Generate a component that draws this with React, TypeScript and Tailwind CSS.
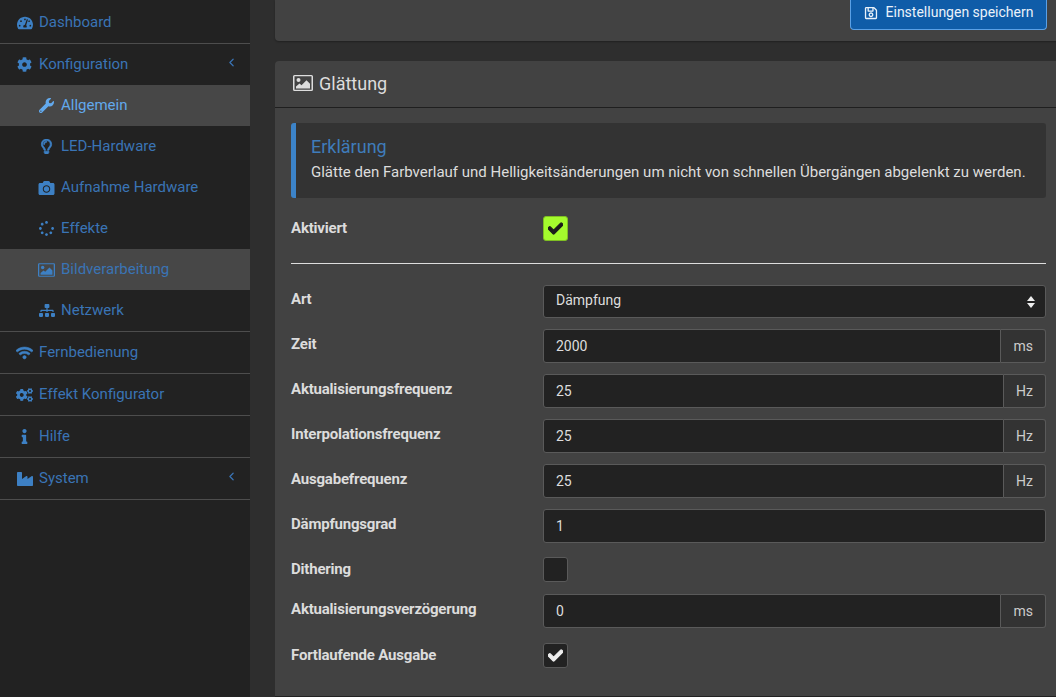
import React from 'react';
import { ChevronLeft } from 'lucide-react';
import {
    FaCamera, FaCheck, FaCog, FaCogs, FaIndustry, FaInfo, FaRegLightbulb,
    FaRegSave, FaSitemap, FaSpinner, FaTachometerAlt, FaWifi, FaWrench,
} from 'react-icons/fa';

type IconType = React.ComponentType<{ className?: string }>;

const topRow = 'flex items-center border-[#4d4d4d] pl-[16px] pr-[12px] text-[#3a74b5]';
const labelText = 'shrink-0 w-[252px] text-[15px] font-bold tracking-[-0.2px] text-[#dcdcdc]';

// picture-o, the library only ships the newer outline
function PictureIcon({ className }: { className?: string }) {
    return (
        <svg viewBox="0 0 20 16" fill="currentColor" className={className}>
            <path fillRule="evenodd" d="M1.500 0h17A1.500 1.500 0 0 1 20 1.500v13a1.500 1.500 0 0 1-1.500 1.500h-17A1.500 1.500 0 0 1 0 14.500v-13A1.500 1.500 0 0 1 1.500 0zM1.500 1.200v13.600h17V1.200z" />
            <circle cx="5.500" cy="5" r="2" />
            <path d="M3 13.500v-2l3.500-3 2 1.700 5-5 3.500 3.500v4.800z" />
        </svg>
    );
}

function TopItem({ icon: Icon, label, caret, iconClass }: { icon: IconType; label: string; caret?: boolean; iconClass?: string }) {
    return (
        <div className={`${topRow} h-[42px] border-b`}>
            <span className="flex w-[23px] shrink-0 justify-center pr-[6px]">
                <Icon className={iconClass ?? 'h-[16px] w-[16px] text-[#3d80c4]'} />
            </span>
            <span className="flex-1 text-[15px]">{label}</span>
            {caret && <ChevronLeft strokeWidth={2.25} className="-mt-[4px] h-[13px] w-[13px] text-[#3a74b5]" />}
        </div>
    );
}

function SubItem({ icon: Icon, label, state, iconClass }: { icon: IconType; label: string; state?: 'current' | 'open'; iconClass?: string }) {
    const bg = state ? 'bg-[#474747]' : '';
    const text = state === 'current' ? 'text-[#62a9ed]' : 'text-[#3a74b5]';
    return (
        <div className={`flex h-[41px] items-center pl-[38px] ${bg} ${text}`}>
            <span className="flex w-[23px] shrink-0 items-center justify-center pr-[6px]">
                <Icon className={`${iconClass ?? 'h-[15px] w-[15px]'} ${state === 'current' ? 'text-[#62a9ed]' : 'text-[#3d80c4]'}`} />
            </span>
            <span className="text-[15px]">{label}</span>
        </div>
    );
}

function Field({ label, value, unit }: { label: string; value: string; unit?: string }) {
    return (
        <div className="mb-[11px] flex h-[34px]">
            <label className={`${labelText} pt-[4px]`}>{label}</label>
            <div className="flex flex-1">
                <div className={`flex flex-1 items-center border border-[#5a5a5a] bg-[#222222] pl-[12px] text-[14px] text-[#dddddd] ${unit ? 'rounded-l-[3px]' : 'rounded-[3px]'}`}>
                    {value}
                </div>
                {unit && (
                    <div className="flex items-center rounded-r-[3px] border border-l-0 border-[#5a5a5a] bg-[#333333] px-[12px] text-[14px] text-[#cccccc]">
                        {unit}
                    </div>
                )}
            </div>
        </div>
    );
}

function CheckRow({ label, checked, accent, className }: { label: string; checked?: boolean; accent?: boolean; className?: string }) {
    return (
        <div className={`flex h-[25px] ${className ?? ''}`}>
            <label className={`${labelText} pt-px`}>{label}</label>
            <span className={`flex h-[25px] w-[25px] items-center justify-center rounded-[3px] border ${accent ? 'border-[#7fbf22] bg-[#a4fb2d]' : 'border-[#5a5a5a] bg-[#222222]'}`}>
                {checked && <FaCheck className={`h-[15px] w-[15px] stroke-[40px] ${accent ? 'text-[#1c1c1c]' : 'text-[#eeeeee]'}`} />}
            </span>
        </div>
    );
}

export default function App() {
    return (
        <div className="flex h-[697px] w-[1056px] overflow-hidden bg-[#2e2e2e] font-['Roboto',sans-serif]">
            <aside className="w-[250px] shrink-0 bg-[#222222] pt-[2px]">
                <TopItem icon={FaTachometerAlt} label="Dashboard" />
                <div className={`${topRow} h-[41px]`}>
                    <span className="flex w-[23px] shrink-0 justify-center pr-[6px]">
                        <FaCog className="h-[15px] w-[15px] text-[#3d80c4]" />
                    </span>
                    <span className="flex-1 text-[15px]">Konfiguration</span>
                    <ChevronLeft strokeWidth={2.25} className="-mt-[4px] h-[13px] w-[13px]" />
                </div>
                <div className="border-b border-[#4d4d4d]">
                    <SubItem icon={FaWrench} label="Allgemein" state="current" />
                    <SubItem icon={FaRegLightbulb} label="LED-Hardware" iconClass="h-[15px] w-[15px] stroke-[25px]" />
                    <SubItem icon={FaCamera} label="Aufnahme Hardware" iconClass="h-[16px] w-[17px]" />
                    <SubItem icon={FaSpinner} label="Effekte" />
                    <SubItem icon={PictureIcon} label="Bildverarbeitung" state="open" iconClass="h-[14px] w-[17px]" />
                    <SubItem icon={FaSitemap} label="Netzwerk" iconClass="h-[15px] w-[16px]" />
                </div>
                <TopItem icon={FaWifi} label="Fernbedienung" iconClass="h-[16px] w-[17px] stroke-[20px] text-[#3d80c4]" />
                <TopItem icon={FaCogs} label="Effekt Konfigurator" iconClass="h-[16px] w-[17px] text-[#3d80c4]" />
                <TopItem icon={FaInfo} label="Hilfe" iconClass="h-[15px] w-[15px] text-[#3d80c4]" />
                <TopItem icon={FaIndustry} label="System" caret />
            </aside>

            <main className="min-w-0 flex-1 pl-[25px]">
                <div className="w-[787px]">
                    <section className="flex h-[41px] items-end justify-end rounded-b-[4px] bg-[#424242] pb-[11px] pr-[15px] shadow-[0_1px_2px_rgba(0,0,0,0.3)]">
                        <button type="button" className="flex h-[30px] w-[197px] items-center justify-center gap-[8px] rounded-b-[4px] border border-t-0 border-[#5aa0e6] bg-[#0f5ca8] pb-[4px] text-[14px] text-[#eaf2fa]">
                            <FaRegSave className="h-[14px] w-[14px]" />
                            Einstellungen speichern
                        </button>
                    </section>

                    <section className="mt-[20px] h-[636px] rounded-t-[4px] border-b border-[#222222] bg-[#424242]">
                        <header className="flex h-[47px] items-center gap-[6px] border-b border-[#1f1f1f] pb-[2px] pl-[18px] text-[18px] text-[#dddddd]">
                            <PictureIcon className="h-[16px] w-[20px]" />
                            Glättung
                        </header>
                        <div className="px-[16px] pt-[15px]">
                            <div className="h-[75px] rounded-[3px] border-l-[5px] border-[#3c83c8] bg-[#333333] pl-[15px] pt-[13px]">
                                <h4 className="text-[18px] leading-[22px] text-[#3f7cba]">Erklärung</h4>
                                <p className="text-[15px] leading-[29px] whitespace-nowrap text-[#dddddd]">
                                    Glätte den Farbverlauf und Helligkeitsänderungen um nicht von schnellen Übergängen abgelenkt zu werden.
                                </p>
                            </div>
                            <CheckRow label="Aktiviert" checked accent className="mt-[18px]" />
                            <hr className="mb-[21px] mt-[22px] border-[#dddddd]" />
                            <div className="mb-[11px] flex h-[33px]">
                                <label className={`${labelText} pt-[3px]`}>Art</label>
                                <div className="flex flex-1 items-center justify-between rounded-[3px] border border-[#5a5a5a] bg-[#222222] pb-[3px] pl-[12px] pr-[10px] text-[14px] text-[#dddddd]">
                                    Dämpfung
                                    <svg width="8" height="12" viewBox="0 0 8 12" fill="#eeeeee" className="mt-[3px]">
                                        <path d="M4 0 8 5H0z" />
                                        <path d="M0 7h8l-4 5z" />
                                    </svg>
                                </div>
                            </div>
                            <Field label="Zeit" value="2000" unit="ms" />
                            <Field label="Aktualisierungsfrequenz" value="25" unit="Hz" />
                            <Field label="Interpolationsfrequenz" value="25" unit="Hz" />
                            <Field label="Ausgabefrequenz" value="25" unit="Hz" />
                            <Field label="Dämpfungsgrad" value="1" />
                            <CheckRow label="Dithering" className="mb-[12px] mt-[14px]" />
                            <Field label="Aktualisierungsverzögerung" value="0" unit="ms" />
                            <CheckRow label="Fortlaufende Ausgabe" checked className="mt-[15px]" />
                        </div>
                    </section>
                </div>
            </main>
        </div>
    );
}
